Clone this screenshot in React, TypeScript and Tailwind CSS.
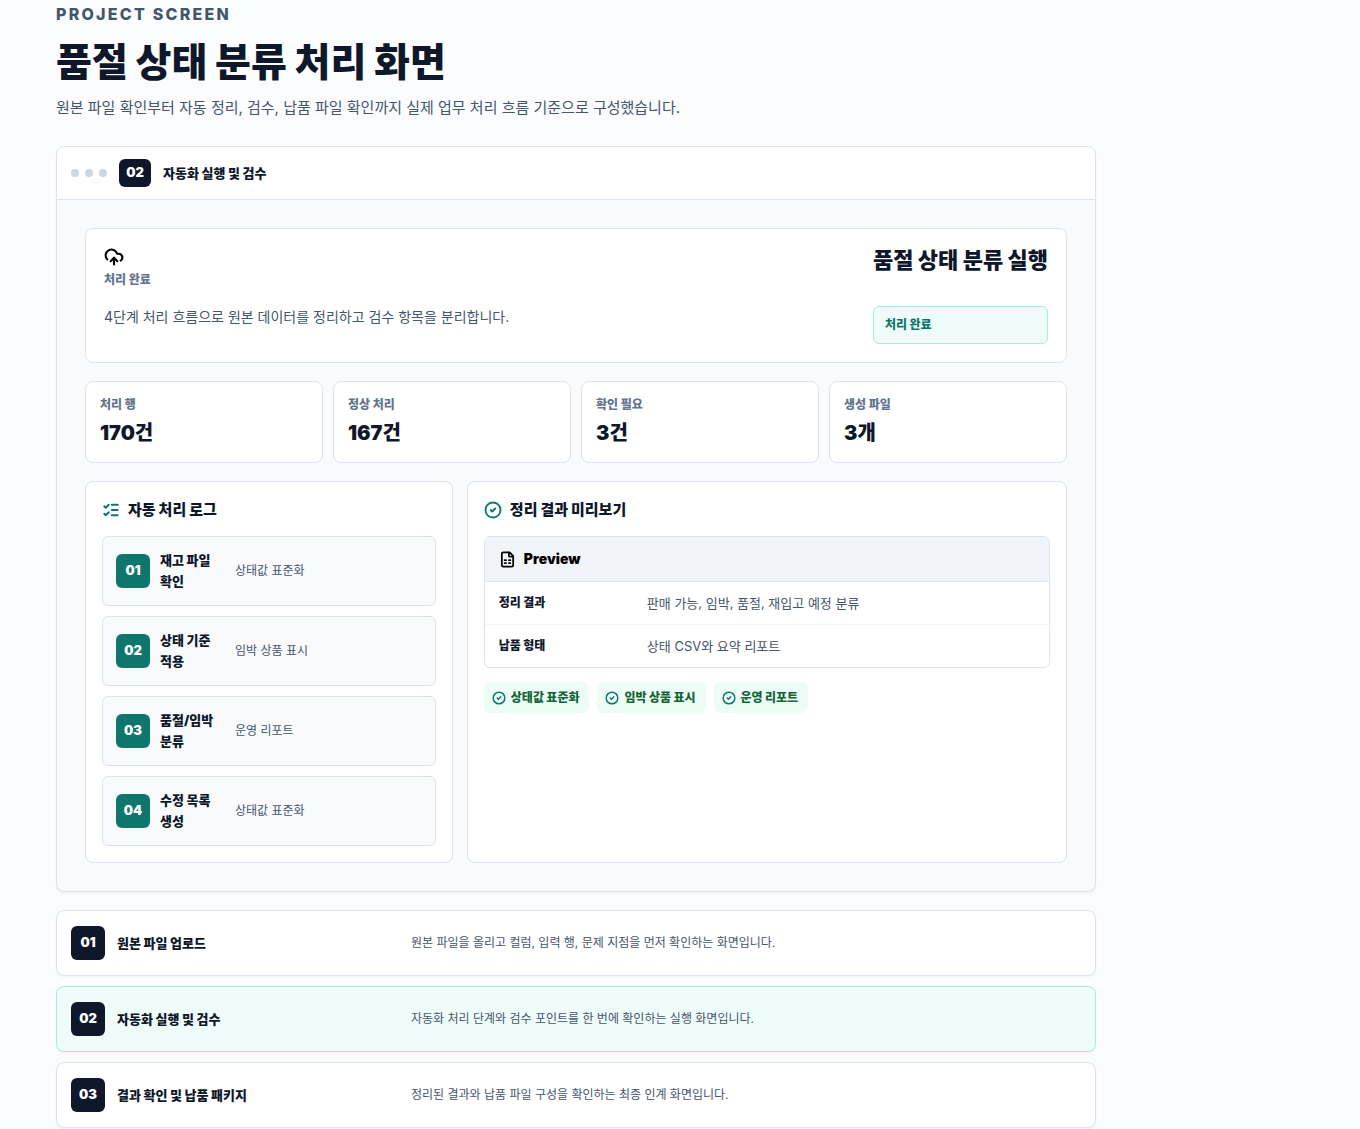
import { useState } from "react";
import { CircleCheck, CloudUpload, FileSpreadsheet, ListChecks } from "lucide-react";

const stats = [
  { label: "처리 행", value: "170건" },
  { label: "정상 처리", value: "167건" },
  { label: "확인 필요", value: "3건" },
  { label: "생성 파일", value: "3개" },
];

const logs = [
  { no: "01", title: "재고 파일 확인", desc: "상태값 표준화" },
  { no: "02", title: "상태 기준 적용", desc: "임박 상품 표시" },
  { no: "03", title: "품절/임박 분류", desc: "운영 리포트" },
  { no: "04", title: "수정 목록 생성", desc: "상태값 표준화" },
];

const previewRows = [
  { label: "정리 결과", value: "판매 가능, 임박, 품절, 재입고 예정 분류" },
  { label: "납품 형태", value: "상태 CSV와 요약 리포트" },
];

const tags = ["상태값 표준화", "임박 상품 표시", "운영 리포트"];

const screens = [
  { no: "01", title: "원본 파일 업로드", desc: "원본 파일을 올리고 컬럼, 입력 행, 문제 지점을 먼저 확인하는 화면입니다." },
  { no: "02", title: "자동화 실행 및 검수", desc: "자동화 처리 단계와 검수 포인트를 한 번에 확인하는 실행 화면입니다." },
  { no: "03", title: "결과 확인 및 납품 패키지", desc: "정리된 결과와 납품 파일 구성을 확인하는 최종 인계 화면입니다." },
];

export default function App() {
  const [active, setActive] = useState("02");
  const current = screens.find((screen) => screen.no === active) ?? screens[1];

  return (
    <main className="min-h-screen break-keep bg-[#fafcfd] px-14 pt-1 font-['Inter','Noto_Sans_CJK_KR',sans-serif] text-slate-900">
      <div className="max-w-[1040px]">
        <header>
          <p className="text-base leading-5 font-extrabold tracking-[0.14em] text-slate-600">PROJECT SCREEN</p>
          <h1 className="mt-3 text-[39px] leading-[52px] font-black">품절 상태 분류 처리 화면</h1>
          <p className="mt-2 text-[15px] leading-6 text-slate-600">
            원본 파일 확인부터 자동 정리, 검수, 납품 파일 확인까지 실제 업무 처리 흐름 기준으로 구성했습니다.
          </p>
        </header>

        <section className="mt-[26px] overflow-hidden rounded-lg border border-[#dce3ec] bg-slate-50 shadow-xs">
          <div className="flex items-center gap-3 border-b border-[#dce3ec] bg-white px-3.5 py-3">
            <div className="flex gap-1.5">
              <span className="size-2 rounded-full bg-[#cdd5df]" />
              <span className="size-2 rounded-full bg-[#cdd5df]" />
              <span className="size-2 rounded-full bg-[#cdd5df]" />
            </div>
            <span className="flex h-7 w-8 items-center justify-center rounded-md bg-slate-900 text-[13px] font-black text-white">
              {current.no}
            </span>
            <strong className="text-[13px] leading-5 font-black">{current.title}</strong>
          </div>

          <div className="grid gap-[18px] p-7">
            <div className="grid grid-cols-[1fr_auto] gap-[18px] rounded-lg border border-[#dbe3ee] bg-white p-[18px]">
              <div>
                <CloudUpload size={20} strokeWidth={2.5} className="text-black" />
                <span className="mt-[5px] block text-xs leading-4 font-extrabold text-slate-500">처리 완료</span>
              </div>
              <h2 className="text-[22px] leading-[26px] font-black">품절 상태 분류 실행</h2>
              <p className="text-sm leading-[22px] text-slate-600">4단계 처리 흐름으로 원본 데이터를 정리하고 검수 항목을 분리합니다.</p>
              <span className="rounded-md border border-[#a7ecd9] bg-[#effdfa] px-[11px] py-2 text-xs leading-5 font-black text-[#0f766e]">
                처리 완료
              </span>
            </div>

            <div className="grid grid-cols-4 gap-2.5">
              {stats.map((stat) => (
                <div key={stat.label} className="rounded-lg border border-[#dbe3ee] bg-white p-3.5">
                  <span className="block text-xs leading-[18px] font-extrabold text-slate-500">{stat.label}</span>
                  <strong className="mt-1 block text-xl leading-[30px] font-black">{stat.value}</strong>
                </div>
              ))}
            </div>

            <div className="grid grid-cols-[38fr_62fr] gap-3.5">
              <section className="rounded-lg border border-[#dbe3ee] bg-white p-4">
                <h3 className="flex items-center gap-2 text-[15px] leading-6 font-black">
                  <ListChecks size={18} strokeWidth={2.5} className="text-[#0f766e]" />
                  자동 처리 로그
                </h3>
                <ol className="mt-3.5 grid gap-2.5">
                  {logs.map((log) => (
                    <li
                      key={log.no}
                      className="grid grid-cols-[34px_65px_1fr] items-center gap-2.5 rounded-md border border-[#dbe3ee] bg-slate-50 p-[13px]"
                    >
                      <span className="flex size-[34px] items-center justify-center rounded-md bg-[#0f766e] text-[13px] font-black text-white">
                        {log.no}
                      </span>
                      <strong className="text-[13px] leading-[21px] font-black">{log.title}</strong>
                      <span className="text-xs leading-5 text-slate-600">{log.desc}</span>
                    </li>
                  ))}
                </ol>
              </section>

              <section className="rounded-lg border border-[#dbe3ee] bg-white p-4">
                <h3 className="flex items-center gap-2 text-[15px] leading-6 font-black">
                  <CircleCheck size={18} strokeWidth={2.5} className="text-[#0f766e]" />
                  정리 결과 미리보기
                </h3>
                <div className="mt-3.5 overflow-hidden rounded-md border border-[#dbe3ee]">
                  <table className="w-full text-left">
                    <thead>
                      <tr className="border-b border-[#dbe3ee] bg-slate-100">
                        <th colSpan={2} className="px-3.5 py-3">
                          <span className="flex items-center gap-2 text-sm leading-5 font-black text-black">
                            <FileSpreadsheet size={17} strokeWidth={2.5} />
                            Preview
                          </span>
                        </th>
                      </tr>
                    </thead>
                    <tbody>
                      {previewRows.map((row) => (
                        <tr key={row.label} className="border-b border-slate-100 last:border-b-0">
                          <th scope="row" className="w-[148px] py-3 pl-3.5 text-xs leading-[18px] font-black">
                            {row.label}
                          </th>
                          <td className="px-3.5 py-3 text-[13px] leading-[18px] text-slate-600">{row.value}</td>
                        </tr>
                      ))}
                    </tbody>
                  </table>
                </div>
                <div className="mt-3.5 flex flex-wrap gap-2">
                  {tags.map((tag) => (
                    <span
                      key={tag}
                      className="flex items-center gap-[5px] rounded-md bg-[#ecfdf5] py-1.5 pr-2.5 pl-2 text-xs leading-[19px] font-black text-[#166534]"
                    >
                      <CircleCheck size={14} strokeWidth={2.5} className="text-[#0f766e]" />
                      {tag}
                    </span>
                  ))}
                </div>
              </section>
            </div>
          </div>
        </section>

        <div className="mt-[18px] grid gap-2.5">
          {screens.map((screen) => (
            <button
              key={screen.no}
              type="button"
              onClick={() => setActive(screen.no)}
              className={`grid grid-cols-[34px_282px_1fr] items-center gap-3 rounded-lg border px-3.5 py-[15px] text-left shadow-xs ${
                screen.no === active ? "border-[#a7ecd9] bg-[#effdfa]" : "border-[#dce3ec] bg-white"
              }`}
            >
              <span className="flex size-[34px] items-center justify-center rounded-md bg-slate-900 text-[13px] font-black text-white">
                {screen.no}
              </span>
              <strong className="text-[13px] leading-5 font-black">{screen.title}</strong>
              <span className="text-xs leading-5 text-slate-600">{screen.desc}</span>
            </button>
          ))}
        </div>
      </div>
    </main>
  );
}
